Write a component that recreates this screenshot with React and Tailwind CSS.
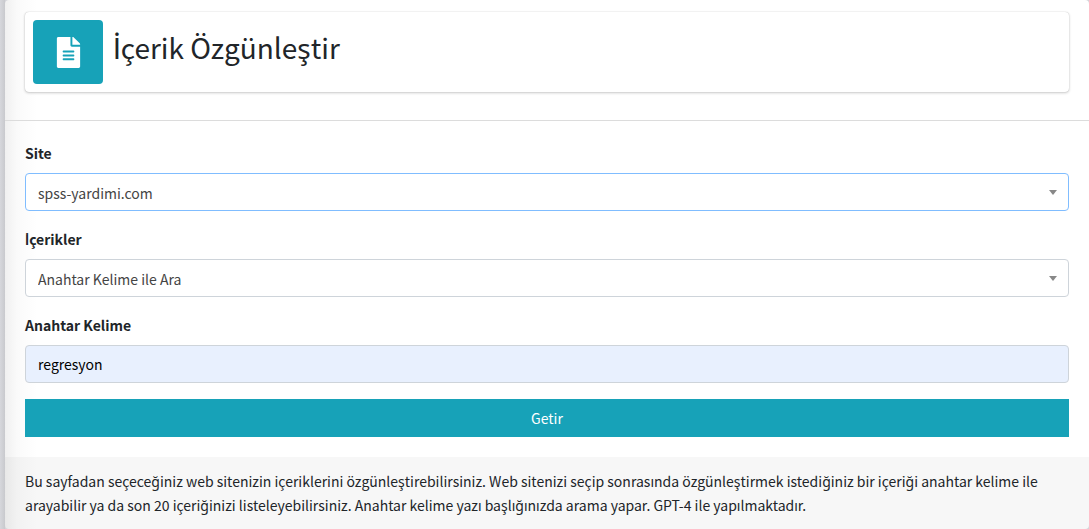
import React, { useState } from 'react';
import { FaFileAlt } from 'react-icons/fa';

const SITES = ['spss-yardimi.com'];
const CONTENT_MODES = ['Anahtar Kelime ile Ara', 'Son 20 İçerik'];

// The CJK family has no dotted capital I of its own, so that letter is set in Lato
const TurkishText = ({ children }) =>
  children.split(/(İ)/).map((part, i) =>
    part === 'İ' ? <span key={i} className="font-['Lato',sans-serif] leading-none">İ</span> : part
  );

const SelectField = ({ id, label, options, value, onChange, borderClass }) => (
  <div className="mb-4">
    <label htmlFor={id} className="mb-2 block font-bold"><TurkishText>{label}</TurkishText></label>
    <div className="relative">
      <select
        id={id}
        value={value}
        onChange={(e) => onChange(e.target.value)}
        className={`block h-[38px] w-full appearance-none rounded border bg-white px-3 pt-[2px] text-[#444] outline-none ${borderClass}`}
      >
        {options.map((option) => <option key={option} value={option}>{option}</option>)}
      </select>
      <svg className="pointer-events-none absolute top-[17px] right-3 h-[5px] w-2" viewBox="0 0 8 5">
        <path d="M0 0h8L4 5z" fill="#888" />
      </svg>
    </div>
  </div>
);

const PageHeader = ({ title }) => (
  <header className="border-b border-[#dcdcdc] px-5 pt-3 pb-7">
    <div className="flex min-h-20 rounded bg-white p-2 shadow-[0_0_1px_rgba(0,0,0,0.25),0_1px_3px_rgba(0,0,0,0.2)]">
      <span className="flex w-[70px] items-center justify-center rounded bg-[#17a2b8]">
        <FaFileAlt className="text-white" size={31} />
      </span>
      <h1 className="pl-[10px] pt-2 text-[28px] leading-[38px]"><TurkishText>{title}</TurkishText></h1>
    </div>
  </header>
);

const App = () => {
  const [site, setSite] = useState(SITES[0]);
  const [mode, setMode] = useState(CONTENT_MODES[0]);
  const [keyword, setKeyword] = useState('regresyon');

  return (
    <div className="flex min-h-screen bg-[#d3d4d9] font-['Noto_Sans_CJK_SC','Noto_Sans',sans-serif] text-[14px] leading-6 text-[#212529]">
      {/* Edge of the sidebar */}
      <div className="w-[5px] shrink-0 bg-linear-to-r from-[#d6d7dc] to-[#c8c9cd]" />

      <main className="min-w-0 flex-1 rounded bg-white bg-linear-to-r from-[#f0f0f0] via-[#fafafa] via-[12px] to-white to-[32px]">
        <PageHeader title="İçerik Özgünleştir" />

        <form className="p-5" onSubmit={(e) => e.preventDefault()}>
          <SelectField id="site" label="Site" options={SITES} value={site} onChange={setSite} borderClass="border-[#80bdff]" />
          <SelectField id="mode" label="İçerikler" options={CONTENT_MODES} value={mode} onChange={setMode} borderClass="border-[#ced4da]" />

          <div className="mb-4">
            <label htmlFor="keyword" className="mb-2 block font-bold">Anahtar Kelime</label>
            <input
              id="keyword"
              type="text"
              value={keyword}
              onChange={(e) => setKeyword(e.target.value)}
              className="block h-[38px] w-full rounded border border-[#ced4da] bg-[#e8f0fe] px-3 text-black outline-none"
            />
          </div>

          <button type="submit" className="block h-[38px] w-full bg-[#17a2b8] text-white hover:bg-[#138496]">Getir</button>
        </form>

        <footer className="rounded-b bg-black/3 px-5 py-3">
          Bu sayfadan seçeceğiniz web sitenizin içeriklerini özgünleştirebilirsiniz. Web sitenizi seçip sonrasında özgünleştirmek istediğiniz bir içeriği anahtar kelime ile arayabilir ya da son 20 içeriğinizi listeleyebilirsiniz. Anahtar kelime yazı başlığınızda arama yapar. GPT-4 ile yapılmaktadır.
        </footer>
      </main>
    </div>
  );
};

export default App;
